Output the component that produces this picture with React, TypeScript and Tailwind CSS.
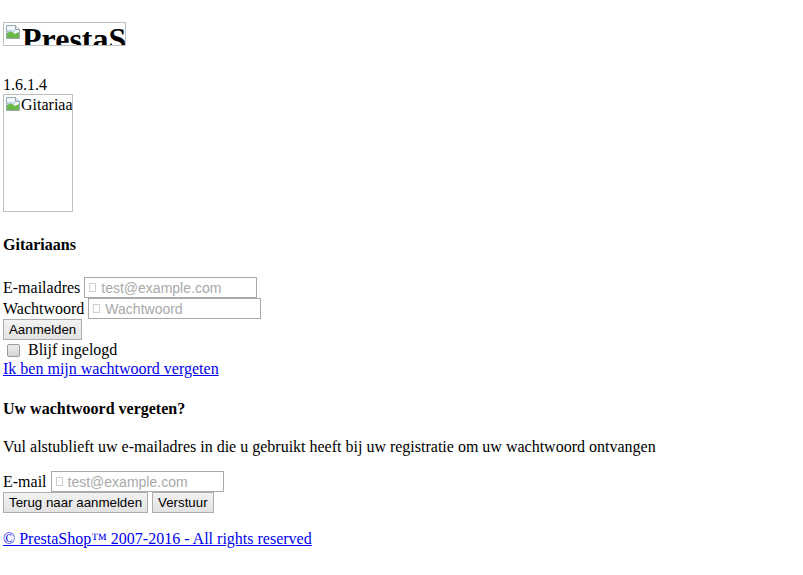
import React from "react";

function BrokenImage() {
  return (
    <svg width="16" height="16" viewBox="0 0 16 16" className="shrink-0">
      <path d="M1.5 1.5h9l4 4v9h-13z" fill="#f4f7fb" stroke="#9aa6b4" />
      <path d="M10.5 1.5v4h4" fill="#e2e8ee" stroke="#9aa6b4" />
      <path d="M2 9l4-2 4 3 4-2v6H2z" fill="#6bb84a" />
      <path d="M2 6h8v2L6 7 2 9z" fill="#bcd6ee" />
    </svg>
  );
}

function GlyphBox() {
  return <span className="inline-block w-[7px] h-[9px] border border-[#d0d0d0] mr-[5px] shrink-0" />;
}

function Field({ label, placeholder }: { label: string; placeholder: string }) {
  return (
    <div className="flex items-center h-[21px]">
      <span>{label}</span>
      <span className="w-[4px]" />
      <div className="w-[173px] h-[21px] border border-[#a9a9a9] bg-white flex items-center pl-[4px] text-[14px] text-[#a9a9a9] font-['Liberation_Sans',Arial,sans-serif]">
        <GlyphBox />
        {placeholder}
      </div>
    </div>
  );
}

function Button({ children }: { children: React.ReactNode }) {
  return (
    <button className="h-[21px] px-[5px] border border-[#adadad] bg-gradient-to-b from-[#f2f2f2] to-[#e3e3e3] text-[13.3px] text-black leading-none font-['Liberation_Sans',Arial,sans-serif]">
      {children}
    </button>
  );
}

export default function App() {
  return (
    <div className="min-h-screen bg-white text-black text-[16px] leading-[18px] font-['Liberation_Serif','Times_New_Roman',serif] pl-[3px]">
      <div className="h-[22px]" />
      {/* logo */}
      <div className="w-[123px] h-[24px] border border-[#c0c0c0] overflow-hidden flex items-start pl-[1px] pt-[1px]">
        <BrokenImage />
        <span className="text-[32px] leading-[36px] font-bold ml-[1px] -mt-[3px] whitespace-nowrap">PrestaShop</span>
      </div>
      <div className="h-[30px]" />
      <div className="h-[18px] leading-[18px]">1.6.1.4</div>
      {/* shop image */}
      <div className="w-[70px] h-[118px] border border-[#c0c0c0] overflow-hidden flex items-start pl-[1px] pt-[1px]">
        <BrokenImage />
        <span className="whitespace-nowrap leading-[18px]">Gitariaans</span>
      </div>
      <h4 className="font-bold mt-[24px] h-[18px]">Gitariaans</h4>

      <div className="mt-[23px] flex flex-col">
        <Field label="E-mailadres" placeholder="test@example.com" />
        <Field label="Wachtwoord" placeholder="Wachtwoord" />
        <div className="flex">
          <Button>Aanmelden</Button>
        </div>
        <label className="flex items-center h-[20px]">
          <span className="inline-block w-[13px] h-[13px] ml-[4px] mr-[8px] rounded-[2px] border border-[#9a9a9a] bg-gradient-to-b from-[#ececec] to-[#d6d6d6]" />
          Blijf ingelogd
        </label>
        <a href="#" className="underline text-[#0000ee] h-[18px]">
          Ik ben mijn wachtwoord vergeten
        </a>
      </div>

      <h4 className="font-bold mt-[22px] h-[18px]">Uw wachtwoord vergeten?</h4>
      <p className="mt-[20px] h-[18px]">
        Vul alstublieft uw e-mailadres in die u gebruikt heeft bij uw registratie om uw wachtwoord ontvangen
      </p>
      <div className="mt-[15px] flex flex-col">
        <Field label="E-mail" placeholder="test@example.com" />
        <div className="flex gap-[4px]">
          <Button>Terug naar aanmelden</Button>
          <Button>Verstuur</Button>
        </div>
      </div>
      <div className="mt-[17px]">
        <a href="#" className="underline text-[#0000ee]">
          © PrestaShop™ 2007-2016 - All rights reserved
        </a>
      </div>
    </div>
  );
}
